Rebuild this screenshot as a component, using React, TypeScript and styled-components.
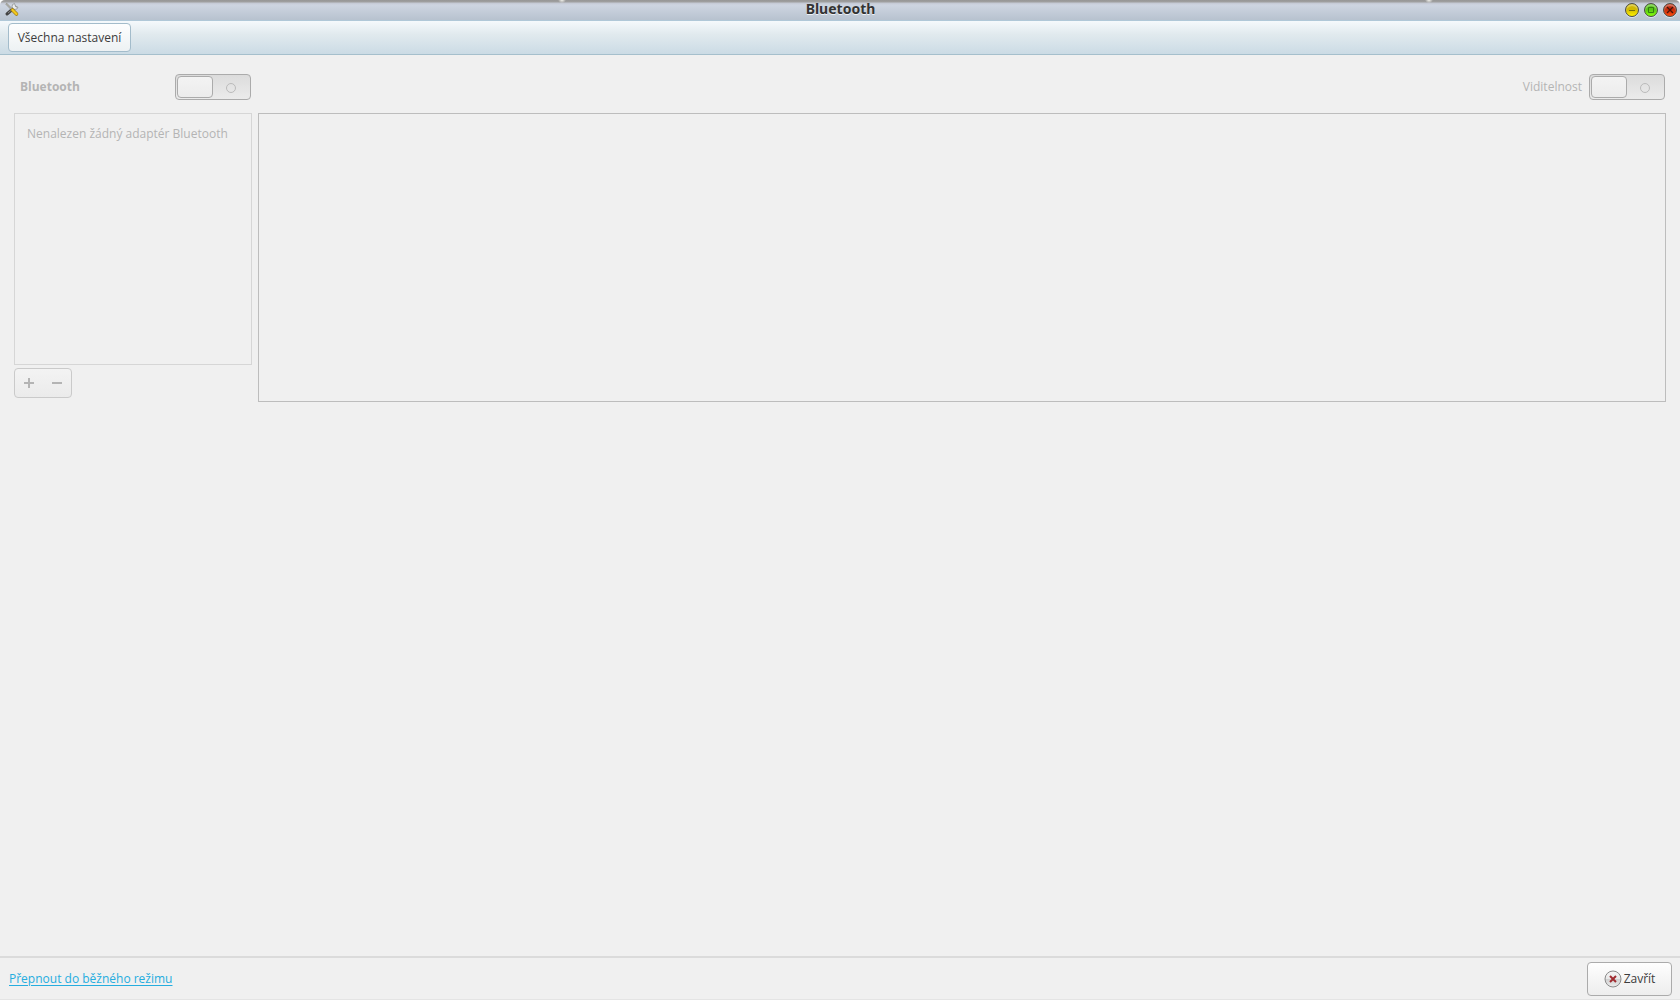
import React from "react";
import styled, { createGlobalStyle } from "styled-components";

const GlobalStyle = createGlobalStyle`
  *, *::before, *::after { box-sizing: border-box; }
  body {
    margin: 0;
    background: #fff;
    color: #3c3c3c;
    font: 12px/16px "Open Sans", "Noto Sans", sans-serif;
  }
  button { font: inherit; color: inherit; }
`;

const Window = styled.div`
  display: flex;
  flex-direction: column;
  min-height: 100vh;
  border-bottom: 1px solid #e4e4e4;
`;

const TitleBar = styled.header`
  position: relative;
  display: grid;
  grid-template-columns: 1fr auto 1fr;
  align-items: center;
  height: 21px;
  padding: 0 3px 1px 4px;
  overflow: hidden;
  border-top-left-radius: 5px;
  border-top-right-radius: 5px;
  background: linear-gradient(#969696 0, #a0a0a0 2px, #c3c8d3 3px, #ced5e1 5px, #b7c2cf 20px, #b0c8d8 20px);
`;

const Glint = styled.span<{ $left: string }>`
  position: absolute;
  top: -3px;
  left: ${(p) => p.$left};
  width: 8px;
  height: 6px;
  background: radial-gradient(#f4f4ee, transparent 70%);
`;

const Title = styled.h1`
  margin: 0;
  font-family: "Noto Sans", sans-serif;
  font-size: 14px;
  line-height: 18px;
  height: 20px;
  font-weight: 700;
  color: #333;
  text-shadow: 0 1px 0 #eef2f7;
`;

const WindowControls = styled.div`
  display: flex;
  justify-content: flex-end;
  gap: 5px;
`;

const ControlButton = styled.button<{ $dark: string; $light: string }>`
  width: 14px;
  height: 14px;
  padding: 0;
  border: 1px solid #4a4a42;
  border-radius: 50%;
  background: linear-gradient(${(p) => p.$dark} 0, ${(p) => p.$dark} 45%, ${(p) => p.$light});
  box-shadow: inset 0 2px 1px rgba(255, 255, 255, 0.35), 0 1px 0 #dce4ec;
  svg { display: block; }
`;

const Toolbar = styled.nav`
  display: flex;
  padding: 2px 8px;
  border-bottom: 1px solid #a5bfcc;
  background: linear-gradient(#f5f9fc, #e1eaee 40%, #cbdbe5);
`;

const ToolButton = styled.button`
  height: 29px;
  width: 123px;
  padding: 0;
  white-space: nowrap;
  border: 1px solid #a3bccb;
  border-radius: 4px;
  background: linear-gradient(#fdfefe, #edf1f3);
`;

const Content = styled.main`
  display: grid;
  grid-template-columns: 238px 1fr;
  column-gap: 6px;
  row-gap: 13px;
  padding: 19px 14px 0;
  flex: 1;
  align-content: start;
  background: #f0f0f0;
`;

const SwitchRow = styled.div<{ $end?: boolean }>`
  display: flex;
  align-items: center;
  justify-content: ${(p) => (p.$end ? "flex-end" : "space-between")};
  gap: 7px;
  padding: 0 1px 0 6px;
  color: #b4b4b4;
`;

const SwitchLabel = styled.label<{ $strong?: boolean }>`
  font-weight: ${(p) => (p.$strong ? 700 : 400)};
`;

const Switch = styled.input`
  appearance: none;
  display: flex;
  align-items: center;
  margin: 0;
  width: 76px;
  height: 26px;
  padding: 1px;
  border: 1px solid #ababab;
  border-radius: 4px;
  background: linear-gradient(#dcdcdc, #ebebeb);
  &::before {
    content: "";
    width: 36px;
    height: 22px;
    border: 1px solid #ababab;
    border-radius: 4px;
    background: linear-gradient(#f3f3f3, #ececec);
  }
  &::after {
    content: "";
    width: 10px;
    height: 10px;
    margin: 2px 0 0 13px;
    border: 1px solid #bbb;
    border-radius: 50%;
  }
`;

const Sidebar = styled.section`
  display: flex;
  flex-direction: column;
  align-items: flex-start;
  gap: 3px;
`;

const DeviceList = styled.div`
  width: 100%;
  height: 252px;
  padding: 12px;
  border: 1px solid #d6d6d6;
  color: #b4b4b4;
`;

const ListActions = styled.div`
  display: flex;
  width: 58px;
  height: 30px;
  border: 1px solid #cacaca;
  border-radius: 4px;
  background: linear-gradient(#f3f3f3, #ebebeb);
`;

const ActionButton = styled.button`
  flex: 1;
  padding: 0;
  border: 0;
  background: none;
  svg { display: block; margin: auto; }
`;

const DetailPanel = styled.section`
  min-height: 289px;
  border: 1px solid #bdbdbd;
`;

const Footer = styled.footer`
  display: flex;
  align-items: center;
  justify-content: space-between;
  padding: 4px 8px 3px 9px;
  border-top: 2px solid #dbdbdb;
  background: #f0f0f0;
`;

const ModeLink = styled.a`
  color: #25addf;
  text-decoration: underline;
  text-underline-offset: 2px;
`;

const CloseButton = styled.button`
  display: flex;
  align-items: center;
  justify-content: center;
  gap: 2px;
  width: 85px;
  height: 34px;
  padding: 0;
  border: 1px solid #ababab;
  border-radius: 4px;
  background: linear-gradient(#fefefe, #ededed);
`;

const ToolsIcon = () => (
  <svg width="16" height="16" viewBox="0 0 16 16" aria-hidden="true">
    <path d="M3 12 11 5" stroke="#444" strokeWidth="3" strokeLinecap="round" />
    <path d="M4 11 11 5" stroke="#888" strokeWidth="1" />
    <path d="M10.500 1.500a3 3 0 1 0 3.500 3.500L12 5 11 3Z" fill="#e9ebec" stroke="#8d9092" strokeWidth=".8" />
    <path d="M2 1.500 8 7.500" stroke="#8a8a82" strokeWidth="1.800" />
    <path d="M2 1.500 8 7.500" stroke="#ddd" strokeWidth=".7" />
    <path d="M8.500 8 12.500 12" stroke="#9c7a10" strokeWidth="3.600" strokeLinecap="round" />
    <path d="M8.500 8 12.500 12" stroke="#f2c81d" strokeWidth="2.400" strokeLinecap="round" />
  </svg>
);

const CloseIcon = () => (
  <svg width="18" height="18" viewBox="0 0 18 18" aria-hidden="true">
    <defs>
      <linearGradient id="closeFace" x2="0" y2="1">
        <stop stopColor="#f5f5f5" />
        <stop offset=".5" stopColor="#e8e8e8" />
        <stop offset=".51" stopColor="#cfcfcf" />
        <stop offset="1" stopColor="#eee" />
      </linearGradient>
    </defs>
    <circle cx="9" cy="9" r="8" fill="url(#closeFace)" stroke="#8a8a8a" />
    <path d="m6 6 6 6m0-6-6 6" stroke="#a02c31" strokeWidth="2" />
  </svg>
);

export default function App() {
  return (
    <>
      <GlobalStyle />
      <Window>
        <TitleBar>
          <Glint $left="33.2%" />
          <Glint $left="84.8%" />
          <ToolsIcon />
          <Title>Bluetooth</Title>
          <WindowControls>
            <ControlButton aria-label="Minimalizovat" $dark="#d0b800" $light="#fff200">
              <svg viewBox="0 0 12 12"><path d="M3 6.500h6" stroke="#75700d" /></svg>
            </ControlButton>
            <ControlButton aria-label="Maximalizovat" $dark="#55c414" $light="#86ff0a">
              <svg viewBox="0 0 12 12"><path d="M3.500 3.500h5v5h-5z" fill="none" stroke="#357d10" /></svg>
            </ControlButton>
            <ControlButton aria-label="Zavřít okno" $dark="#c42b0c" $light="#ff4a0c">
              <svg viewBox="0 0 12 12"><path d="m3 3 6 6m0-6-6 6" stroke="#4a1208" strokeWidth="1.400" /></svg>
            </ControlButton>
          </WindowControls>
        </TitleBar>
        <Toolbar>
          <ToolButton>Všechna nastavení</ToolButton>
        </Toolbar>
        <Content>
          <SwitchRow>
            <SwitchLabel htmlFor="power" $strong>Bluetooth</SwitchLabel>
            <Switch id="power" type="checkbox" role="switch" disabled />
          </SwitchRow>
          <SwitchRow $end>
            <SwitchLabel htmlFor="visibility">Viditelnost</SwitchLabel>
            <Switch id="visibility" type="checkbox" role="switch" disabled />
          </SwitchRow>
          <Sidebar>
            <DeviceList>Nenalezen žádný adaptér Bluetooth</DeviceList>
            <ListActions>
              <ActionButton aria-label="Přidat" disabled>
                <svg width="10" height="10"><path d="M0 5h10M5 0v10" stroke="#b4b4b4" strokeWidth="2" /></svg>
              </ActionButton>
              <ActionButton aria-label="Odebrat" disabled>
                <svg width="10" height="10"><path d="M0 5h10" stroke="#b4b4b4" strokeWidth="2" /></svg>
              </ActionButton>
            </ListActions>
          </Sidebar>
          <DetailPanel />
        </Content>
        <Footer>
          <ModeLink href="#">Přepnout do běžného režimu</ModeLink>
          <CloseButton>
            <CloseIcon />
            Zavřít
          </CloseButton>
        </Footer>
      </Window>
    </>
  );
}
